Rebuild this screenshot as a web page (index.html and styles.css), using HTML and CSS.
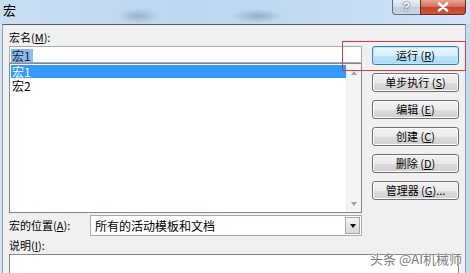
FILE: index.html
```html
<!DOCTYPE html>
<html lang="zh-CN">
<head>
    <meta charset="UTF-8">
    <title>宏</title>
    <link rel="stylesheet" href="styles.css">
</head>
<body>
    <div class="window">
        <div class="titlebar">
            <span class="title">宏</span>
            <div class="caption">
                <span class="cap-btn help">?</span>
                <span class="cap-btn close">
                    <svg width="14" height="10" viewBox="0 0 14 10">
                        <path d="M3 1.5 L11 8.5 M11 1.5 L3 8.5" stroke="#fff" stroke-width="2.6" stroke-linecap="round"/>
                    </svg>
                </span>
            </div>
        </div>
        <div class="frame">
            <div class="dialog">
                <div class="top">
                    <div class="left">
                        <div class="lbl">宏名(<u>M</u>):</div>
                        <div class="input"><span class="sel">宏1</span></div>
                        <div class="listbox">
                            <div class="items">
                                <div class="item active">宏1</div>
                                <div class="item">宏2</div>
                            </div>
                            <div class="vscroll">
                                <span class="arr up"></span>
                                <span class="arr down"></span>
                            </div>
                        </div>
                    </div>
                    <div class="buttons">
                        <div class="btn default">运行 (<u>R</u>)</div>
                        <div class="btn">单步执行 (<u>S</u>)</div>
                        <div class="btn">编辑 (<u>E</u>)</div>
                        <div class="btn">创建 (<u>C</u>)</div>
                        <div class="btn">删除 (<u>D</u>)</div>
                        <div class="btn">管理器 (<u>G</u>)...</div>
                    </div>
                </div>
                <div class="loc-row">
                    <span class="lbl loc-lbl">宏的位置(<u>A</u>):</span>
                    <div class="combo">
                        <span class="combo-text">所有的活动模板和文档</span>
                        <span class="drop"></span>
                    </div>
                </div>
                <div class="lbl desc-lbl">说明(<u>I</u>):</div>
                <div class="desc"></div>
            </div>
        </div>
        <div class="highlight"></div>
        <div class="watermark">头条 @AI机械师</div>
    </div>
</body>
</html>
```

FILE: styles.css
```css
* {
    box-sizing: border-box;
}
body {
    margin: 0;
    width: 470px;
    height: 273px;
    overflow: hidden;
    font-family: "Noto Sans CJK SC", "Liberation Sans", sans-serif;
    font-size: 11px;
    color: #000;
    background: #c5dbf1;
}
.window {
    position: relative;
    height: 273px;
    overflow: hidden;
}
.titlebar {
    height: 24px;
    display: flex;
    align-items: flex-start;
    background:
        radial-gradient(ellipse 22px 8px at 138px 16px, rgba(90,110,135,0.35), transparent),
        radial-gradient(ellipse 26px 7px at 258px 16px, rgba(90,110,135,0.4), transparent),
        linear-gradient(90deg, #cadef2, #bdd6ee 40%, #c4dbf1 70%, #d2e4f5);
}
.title {
    font-size: 13px;
    line-height: 16px;
    padding: 2px 0 0 3px;
}
.caption {
    margin-left: auto;
    margin-right: 4px;
    display: flex;
}
.cap-btn {
    height: 15px;
    display: flex;
    align-items: center;
    justify-content: center;
    border: 1px solid #5f6f84;
    border-top: none;
}
.help {
    width: 28px;
    border-right: none;
    border-radius: 0 0 0 4px;
    background: linear-gradient(#e8eef5, #cfdbe8 50%, #bccbdd 51%, #c9d6e4);
    color: #fff;
    font-family: "Liberation Sans", sans-serif;
    font-weight: bold;
    font-size: 12px;
    line-height: 14px;
    text-shadow: 0 0 2px #46566b, 0 0 1px #46566b;
}
.close {
    width: 46px;
    border-color: #6e2a1e;
    border-radius: 0 0 4px 0;
    background: linear-gradient(#e6a697, #d26d58 50%, #c24028 51%, #d0563c);
}
.frame {
    height: 249px;
    padding: 0 4px 0 2px;
    background: linear-gradient(90deg, #d3e3f3, #c5dbf1);
}
.dialog {
    height: 100%;
    overflow: hidden;
    background: #f0f0f0;
    border-top: 1px solid #4e5b6b;
    border-left: 1px solid #8f9cab;
    border-right: 1px solid #8f9cab;
    padding: 4px 6px 0 6px;
}
.top {
    display: flex;
    gap: 10px;
}
.left {
    width: 353px;
}
.lbl {
    height: 17px;
    line-height: 17px;
    white-space: nowrap;
}
.input {
    height: 17px;
    border: 1px solid #a5acb5;
    background: #fff;
    padding: 1px 0 0 1px;
}
.sel {
    display: inline-block;
    font-size: 12px;
    line-height: 13px;
    padding: 0 2px 0 1px;
    background: #8fb9e8;
    color: #0d1f45;
}
.listbox {
    height: 150px;
    border: 1px solid #828790;
    background: #fff;
    display: flex;
}
.items {
    flex: 1;
    padding: 1px 0 0 1px;
}
.item {
    height: 13px;
    line-height: 13px;
    font-size: 12px;
    padding-left: 1px;
}
.item + .item {
    margin-top: 1px;
}
.item.active {
    background: #3399ff;
    color: #fff;
}
.vscroll {
    width: 15px;
    background: #f4f4f4;
    border-left: 1px solid #ececec;
    display: flex;
    flex-direction: column;
    justify-content: space-between;
    align-items: center;
    padding: 7px 0 6px;
}
.arr {
    width: 0;
    height: 0;
    border-left: 3.5px solid transparent;
    border-right: 3.5px solid transparent;
}
.arr.up {
    border-bottom: 4px solid #a3a3a3;
}
.arr.down {
    border-top: 4px solid #a3a3a3;
}
.buttons {
    width: 87px;
    padding-top: 17px;
    display: flex;
    flex-direction: column;
    gap: 8px;
}
.btn {
    height: 19px;
    line-height: 17px;
    text-align: center;
    white-space: nowrap;
    border: 1px solid #707070;
    border-radius: 3px;
    background: linear-gradient(#f2f2f2, #ebebeb 50%, #dddddd 51%, #cfcfcf);
    box-shadow: inset 0 0 0 1px #fbfbfb;
}
.btn.default {
    border-color: #3c7fb1;
    background: linear-gradient(#eaf6fd, #d9f0fc 50%, #bee6fd 51%, #a7d9f5);
    box-shadow: inset 0 0 0 1px #bfe4f8;
}
.loc-row {
    display: flex;
    align-items: center;
    margin-top: 2px;
    height: 21px;
}
.loc-lbl {
    width: 81px;
}
.combo {
    width: 272px;
    height: 21px;
    border: 1px solid #a5acb5;
    background: #fff;
    display: flex;
    align-items: center;
    padding: 0 1px 0 4px;
}
.combo-text {
    flex: 1;
    font-size: 12px;
    line-height: 17px;
}
.drop {
    width: 15px;
    height: 17px;
    border: 1px solid #a7a7a7;
    background: linear-gradient(#f4f4f4, #d8d8d8);
    display: flex;
    align-items: center;
    justify-content: center;
}
.drop::after {
    content: "";
    border-left: 3.5px solid transparent;
    border-right: 3.5px solid transparent;
    border-top: 4px solid #000;
}
.desc-lbl {
    margin-top: 1px;
}
.desc {
    width: 450px;
    height: 30px;
    border: 1px solid #828790;
    background: #fff;
}
.highlight {
    position: absolute;
    left: 342px;
    top: 41px;
    width: 124px;
    height: 30px;
    border: 1px solid #d83a3a;
}
.watermark {
    position: absolute;
    right: 8px;
    top: 251px;
    font-size: 13px;
    line-height: 16px;
    color: #7c7c7c;
    text-shadow: 0 0 2px #fff, 0 0 1px #fff;
}
```
